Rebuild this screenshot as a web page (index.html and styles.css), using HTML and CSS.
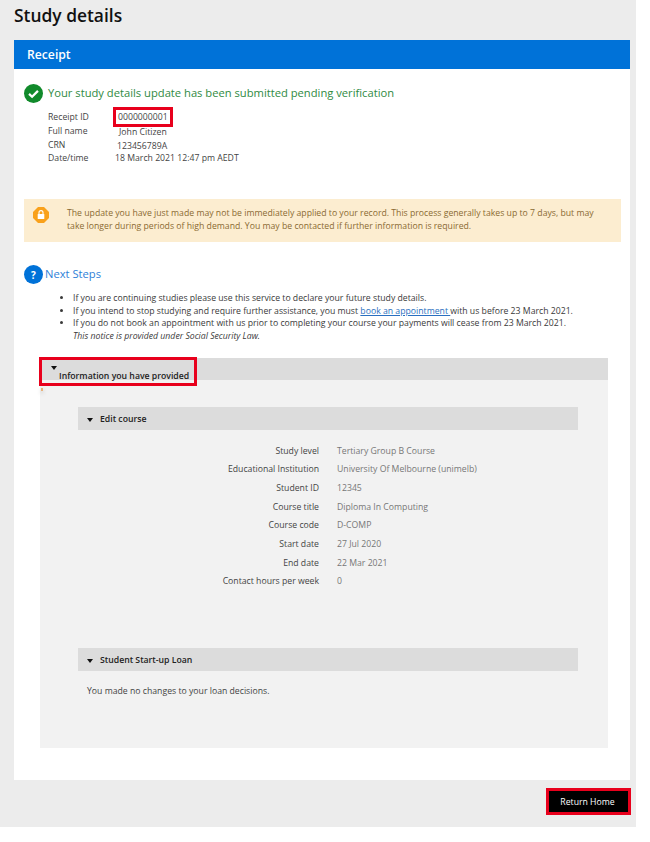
FILE: index.html
```html
<!DOCTYPE html>
<html lang="en">
<head>
<meta charset="utf-8">
<title>Study details</title>
<link rel="stylesheet" href="styles.css">
</head>
<body>
<div class="page">
  <h1 class="title">Study details</h1>
  <main class="card">
    <h2 class="card-head">Receipt</h2>
    <div class="card-body">
      <div class="success">
        <svg class="icon" viewBox="0 0 20 20"><circle cx="10" cy="10" r="10" fill="#118a2b"/><path d="M5.3 10.4l3.2 3 6.2-6.2" fill="none" stroke="#fff" stroke-width="2.4"/></svg>
        <span class="lead">Your study details update has been submitted pending verification</span>
      </div>
      <dl class="receipt">
        <dt>Receipt ID</dt><dd class="v-id"><span class="mark">0000000001</span></dd>
        <dt>Full name</dt><dd class="v-name">John Citizen</dd>
        <dt>CRN</dt><dd class="v-crn">123456789A</dd>
        <dt>Date/time</dt><dd class="v-date">18 March 2021 12:47 pm AEDT</dd>
      </dl>
      <div class="alert">
        <svg class="alert-icon" viewBox="0 0 16 16"><path d="M5 0h6l5 5v6l-5 5H5l-5-5V5z" fill="#f9a11b"/><rect x="4.7" y="7" width="6.6" height="5" rx=".6" fill="#fff"/><path d="M6 7.2V5.6a2 2 0 0 1 4 0v1.6" fill="none" stroke="#fff" stroke-width="1.1"/></svg>
        <p>The update you have just made may not be immediately applied to your record. This process generally takes up to 7 days, but may take longer during periods of high demand. You may be contacted if further information is required.</p>
      </div>
      <div class="next">
        <span class="q">?</span>
        <span class="lead">Next Steps</span>
      </div>
      <ul class="steps">
        <li>If you are continuing studies please use this service to declare your future study details.</li>
        <li>If you intend to stop studying and require further assistance, you must <a href="#">book an appointment </a>with us before 23 March 2021.</li>
        <li>If you do not book an appointment with us prior to completing your course your payments will cease from 23 March 2021.<br><em>This notice is provided under Social Security Law.</em></li>
      </ul>
      <section class="panel">
        <header class="panel-head">
          <div class="panel-mark"><span class="caret"></span><strong>Information you have provided</strong></div>
        </header>
        <div class="panel-body">
          <h3 class="sub-head"><span class="caret"></span>Edit course</h3>
          <dl class="details">
            <dt>Study level</dt><dd>Tertiary Group B Course</dd>
            <dt>Educational Institution</dt><dd>University Of Melbourne (unimelb)</dd>
            <dt>Student ID</dt><dd>12345</dd>
            <dt>Course title</dt><dd>Diploma In Computing</dd>
            <dt>Course code</dt><dd>D-COMP</dd>
            <dt>Start date</dt><dd>27 Jul 2020</dd>
            <dt>End date</dt><dd>22 Mar 2021</dd>
            <dt>Contact hours per week</dt><dd>0</dd>
          </dl>
          <h3 class="sub-head"><span class="caret"></span>Student Start-up Loan</h3>
          <p class="note">You made no changes to your loan decisions.</p>
        </div>
      </section>
    </div>
  </main>
  <div class="actions"><button class="home" type="button">Return Home</button></div>
</div>
</body>
</html>
```
FILE: styles.css
```css
* { box-sizing: border-box; }
html, body { margin: 0; padding: 0; background: #fff; }
body { font-family: "Open Sans", "Liberation Sans", sans-serif; font-size: 8.7px; color: #333; }
.page { width: 636px; height: 827px; background: #ececec; padding: 0 6px 0 14px; display: flex; flex-direction: column; }
.title { margin: 0; height: 40px; padding-top: 3px; font-size: 17.4px; line-height: 25px; font-weight: 600; color: #111; }
.card { background: #fff; height: 740px; }
.card-head { margin: 0; height: 29px; background: #0072d8; color: #fff; font-size: 12.2px; font-weight: 600; line-height: 29px; padding-left: 13px; }
.card-body { padding: 14px 9px 0 10px; }
.success { display: flex; align-items: center; gap: 5px; height: 20px; font-size: 11.2px; color: #2f8a3f; }
.lead { margin-top: -2px; }
.icon { width: 19px; height: 19px; flex: none; }
.receipt { margin: 8px 0 0 24px; display: grid; grid-template-columns: 67px 1fr; grid-auto-rows: 13.8px; line-height: 13.8px; color: #444; height: 55px; }
.receipt dt, .receipt dd { margin: 0; }
.v-id { padding-left: 3px; }
.v-name { padding-left: 4px; padding-top: 1px; }
.v-crn { padding-left: 2px; padding-top: 1px; }
.mark { padding: 0 1px; margin: 0 -1px; outline: 3px solid #e8001c; outline-offset: 1px; }
.alert { margin-top: 33px; height: 43px; background: #fcedd0; display: flex; gap: 18px; padding: 8px 8px 0 9px; color: #8a6a32; line-height: 12.5px; }
.alert p { margin: 0; }
.alert-icon { width: 16px; height: 16px; flex: none; }
.next { margin-top: 23px; display: flex; align-items: center; gap: 2px; height: 19px; font-size: 11.2px; color: #2f7fd8; }
.q { width: 19px; height: 19px; border-radius: 50%; background: #0072d8; color: #fff; font-weight: 700; font-size: 10px; display: flex; align-items: center; justify-content: center; }
.steps { margin: 8px 0 0; padding: 0 0 0 49px; line-height: 12.5px; color: #3a3a3a; }
.steps a { color: #2a6fc0; }
.panel { margin: 16px 13px 0 16px; height: 390px; background: #f2f2f2; }
.panel-head { height: 22px; background: #dcdcdc; }
.panel-mark { position: relative; width: 156px; height: 27px; margin: 0; outline: 3px solid #e8001c; outline-offset: -2px; padding: 12px 0 0 19px; line-height: 13px; color: #222; }
.panel-mark strong { font-weight: 600; }
.panel-mark .caret { position: absolute; left: 11px; top: 8px; margin: 0; }
.panel-mark::after { content: ""; position: absolute; left: 1px; top: 30px; width: 2px; height: 3px; background: #e9b27a; box-shadow: 0 2px 4px rgba(0,0,0,.25); }
.panel-body { padding: 27px 30px 0 38px; }
.caret { display: inline-block; width: 0; height: 0; border: 3.5px solid transparent; border-top: 4px solid #111; border-bottom: 0; margin-right: 7px; vertical-align: middle; }
.sub-head { margin: 0; height: 23px; background: #dcdcdc; padding-left: 9px; font-size: 8.7px; line-height: 25px; font-weight: 600; color: #222; }
.details { margin: 11.6px 0 0; display: grid; grid-template-columns: 241px 1fr; column-gap: 18px; grid-auto-rows: 18.7px; line-height: 18.7px; height: 206.4px; }
.details dt { margin: 0; text-align: right; color: #444; }
.details dd { margin: 0; color: #777; }
.note { margin: 14px 0 0 9px; line-height: 13px; color: #444; }
.actions { display: flex; justify-content: flex-end; padding: 8px 0 0; margin-right: -1px; }
.home { width: 85px; height: 27px; padding: 0 2px 0 0; background: #000; color: #fff; border: 3px solid #e8001c; font: inherit; }
```
